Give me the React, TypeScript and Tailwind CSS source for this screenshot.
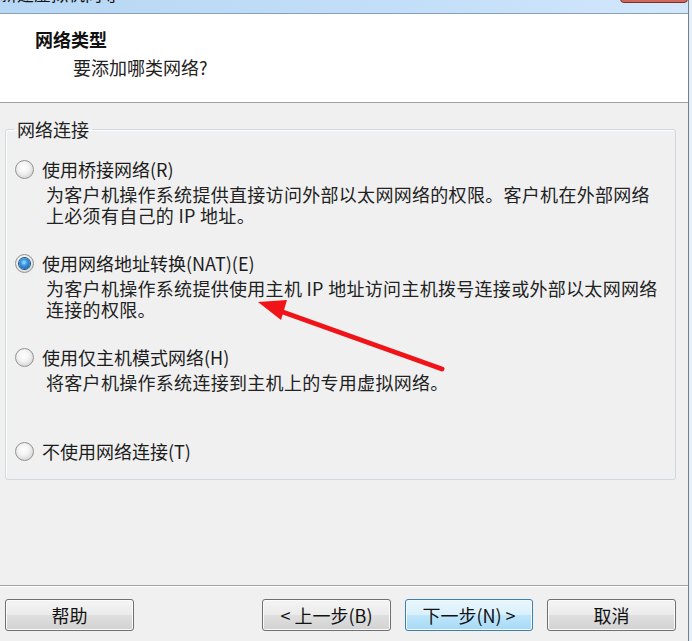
import React from "react";

const font = "font-['Noto_Sans_CJK_SC','Noto_Sans',sans-serif]";

const Radio = ({ checked = false }: { checked?: boolean }) => (
  <span className="w-[19px] h-[19px] rounded-full border border-[#939393] bg-[radial-gradient(circle_at_45%_40%,#ffffff_0%,#f3f3f3_40%,#c4c4c4_100%)] flex items-center justify-center shrink-0">
    {checked && (
      <span className="w-[11px] h-[11px] rounded-full bg-[radial-gradient(circle_at_45%_40%,#a9e0ff_0%,#3a9be3_35%,#12498a_100%)] shadow-[0_0_0_1px_#1d4f86]" />
    )}
  </span>
);

const Option = ({
  label,
  lines = [],
  checked = false,
  height = "h-[94px]",
}: {
  label: React.ReactNode;
  lines?: React.ReactNode[];
  checked?: boolean;
  height?: string;
}) => (
  <div className={height}>
    <div className="flex items-center h-[26px]">
      <span className="ml-[9px]">
        <Radio checked={checked} />
      </span>
      <span className="ml-[8px] text-[18px] leading-[26px] text-[#1c1c1c] whitespace-nowrap">{label}</span>
    </div>
    <div className="ml-[40px] mt-[2px] text-[18px] leading-[21px] tracking-[0.3px] text-[#222] whitespace-nowrap">
      {lines.map((l, i) => (
        <div key={i}>{l}</div>
      ))}
    </div>
  </div>
);

const Button = ({ children, primary = false }: { children: React.ReactNode; primary?: boolean }) => (
  <button
    className={
      primary
        ? "w-[128px] h-[32px] rounded-[3px] border border-[#3c7fb1] bg-[linear-gradient(to_bottom,#eaf6fd_0%,#d9f0fc_50%,#bee6fd_51%,#a7d9f5_100%)] shadow-[inset_0_0_0_1px_#f4fbff] text-[18px] leading-none text-[#111]"
        : "w-[129px] h-[32px] rounded-[3px] border border-[#707070] bg-[linear-gradient(to_bottom,#f4f4f4_0%,#ebebeb_50%,#dfdfdf_51%,#d2d2d2_100%)] shadow-[inset_0_0_0_1px_#fbfbfb] text-[18px] leading-none text-[#111]"
    }
  >
    {children}
  </button>
);

export default function App() {
  return (
    <div className={`w-[692px] h-[641px] flex bg-[#e6eff8] relative overflow-hidden ${font}`}>
      <div className="w-[689px] h-full flex flex-col border-r border-[#6f7f8e]">
        {/* title bar, clipped */}
        <div className="h-[14px] shrink-0 relative overflow-hidden border-b border-[#8aa0b6] bg-[linear-gradient(to_right,#b7d7f4,#c3def8_60%,#d2e7fb)]">
          <div className="absolute left-[0px] top-[-15px] text-[17px] leading-[18px] text-[#111] whitespace-nowrap">
            新建虚拟机向导
          </div>
          <div className="absolute right-[0px] top-[-10px] w-[68px] h-[13px] rounded-b-[4px] border border-[#7a2e27] bg-[#d0685d]" />
        </div>

        {/* header */}
        <div className="h-[89px] shrink-0 bg-white border-b border-[#a0a0a0] shadow-[0_1px_0_#ffffff] pl-[35px] pt-[13px]">
          <div className="text-[18px] leading-[24px] font-bold text-[#111]">网络类型</div>
          <div className="mt-[4px] pl-[38px] text-[18px] leading-[24px] text-[#222]">要添加哪类网络?</div>
        </div>

        {/* body */}
        <div className="flex-1 flex flex-col bg-[#f0f0f0] pt-[16px]">
          <fieldset className="ml-[5px] w-[671px] h-[361px] border border-[#d0d9df] rounded-[3px] shadow-[inset_1px_1px_0_#ffffff] pt-[17px]">
            <legend className="ml-[8px] px-[3px] text-[18px] leading-[20px] text-[#222]">网络连接</legend>
            <Option
              label="使用桥接网络(R)"
              lines={[
                "为客户机操作系统提供直接访问外部以太网网络的权限。客户机在外部网络",
                "上必须有自己的 IP 地址。",
              ]}
            />
            <Option
              checked
              label="使用网络地址转换(NAT)(E)"
              lines={[
                "为客户机操作系统提供使用主机 IP 地址访问主机拨号连接或外部以太网网络",
                "连接的权限。",
              ]}
            />
            <Option label="使用仅主机模式网络(H)" lines={["将客户机操作系统连接到主机上的专用虚拟网络。"]} />
            <Option label="不使用网络连接(T)" height="h-[26px]" />
          </fieldset>

          {/* footer */}
          <div className="mt-auto h-[56px] border-t border-[#a0a0a0] shadow-[inset_0_1px_0_#ffffff] pt-[13px] flex items-start">
            <div className="ml-[5px]">
              <Button>帮助</Button>
            </div>
            <div className="ml-auto mr-[12px] flex gap-[14px]">
              <Button>&lt; 上一步(B)</Button>
              <Button primary>下一步(N) &gt;</Button>
              <Button>取消</Button>
            </div>
          </div>
        </div>
      </div>

      {/* red annotation arrow */}
      <svg className="absolute left-0 top-0 pointer-events-none" width="692" height="641" viewBox="0 0 692 641">
        <line x1="442" y1="369" x2="280" y2="311" stroke="#f01418" strokeWidth="5" strokeLinecap="round" />
        <polygon points="258,302 287,300 281,320" fill="#f01418" />
      </svg>
    </div>
  );
}
